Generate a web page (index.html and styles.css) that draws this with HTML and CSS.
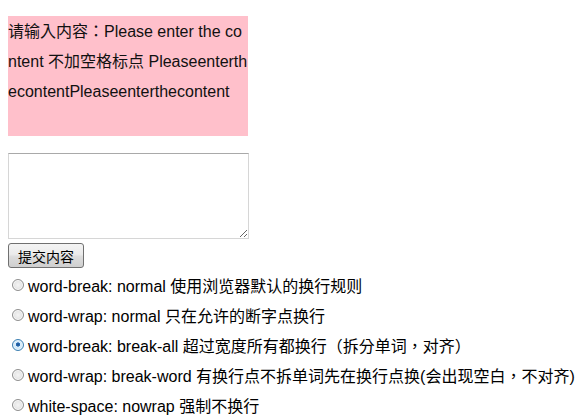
FILE: index.html
```html
<!DOCTYPE html>
<html lang="zh-TW">
<head>
<meta charset="utf-8">
<title>word-break demo</title>
<link rel="stylesheet" href="styles.css">
</head>
<body>
<div class="box">请输入内容：Please enter the content 不加空格标点 PleaseenterthecontentPleaseenterthecontent</div>
<textarea class="input"></textarea>
<button class="submit" type="button">提交内容</button>
<div class="options">
  <label class="opt"><input type="radio" name="mode" class="radio"><span>word-break: normal 使用浏览器默认的换行规则</span></label>
  <label class="opt"><input type="radio" name="mode" class="radio"><span>word-wrap: normal 只在允许的断字点换行</span></label>
  <label class="opt"><input type="radio" name="mode" class="radio" checked><span>word-break: break-all 超过宽度所有都换行（拆分单词，对齐）</span></label>
  <label class="opt"><input type="radio" name="mode" class="radio"><span>word-wrap: break-word 有换行点不拆单词先在换行点换(会出现空白，不对齐)</span></label>
  <label class="opt"><input type="radio" name="mode" class="radio"><span>white-space: nowrap 强制不换行</span></label>
</div>
</body>
</html>
```

FILE: styles.css
```css
html, body {
  margin: 0;
  padding: 0;
  background: #fff;
}
body {
  padding: 8px;
  font-family: "Liberation Sans", "Noto Sans CJK TC", "Noto Sans CJK SC", sans-serif;
  font-size: 16px;
  color: #000;
}
.box {
  margin-top: 8px;
  width: 240px;
  height: 120px;
  background: #ffc0cb;
  line-height: 30px;
  padding-top: 1px;
  box-sizing: border-box;
  word-break: break-all;
  color: #111;
}
.input {
  display: block;
  box-sizing: border-box;
  margin: 17px 0 0 0;
  width: 241px;
  height: 86px;
  border: 1px solid #d6d6d6;
  border-top-color: #a9a9a9;
  padding: 2px;
  background: #fff;
  font-family: "Liberation Mono", monospace;
}
.submit {
  display: block;
  box-sizing: border-box;
  margin-top: 4px;
  width: 76px;
  height: 25px;
  padding: 0;
  border: 1px solid #707070;
  border-radius: 3px;
  background: linear-gradient(#f4f4f4 0%, #ebebeb 45%, #dddddd 55%, #cfcfcf 100%);
  font-family: "Liberation Sans", "Noto Sans CJK TC", "Noto Sans CJK SC", sans-serif;
  font-size: 14px;
  color: #000;
}
.options {
  margin-top: 2px;
}
.opt {
  display: flex;
  align-items: center;
  height: 30px;
  white-space: nowrap;
}
.radio {
  -webkit-appearance: none;
  appearance: none;
  box-sizing: border-box;
  width: 12px;
  height: 12px;
  margin: 0 4px 0 4px;
  border-radius: 50%;
  border: 1px solid #8f8f8f;
  background: radial-gradient(circle at 50% 50%, #f4f4f4 0%, #e6e6e6 55%, #d2d2d2 100%);
  box-shadow: inset 0 0 0 1px #fafafa;
  flex: none;
}
.radio:checked {
  border-color: #3c7fb1;
  background: radial-gradient(circle at 50% 45%, #1d4e8a 0%, #2a6fb7 25%, #dceefa 32%, #bfdff4 100%);
  box-shadow: inset 0 0 0 1px #e8f5fd;
}
```
